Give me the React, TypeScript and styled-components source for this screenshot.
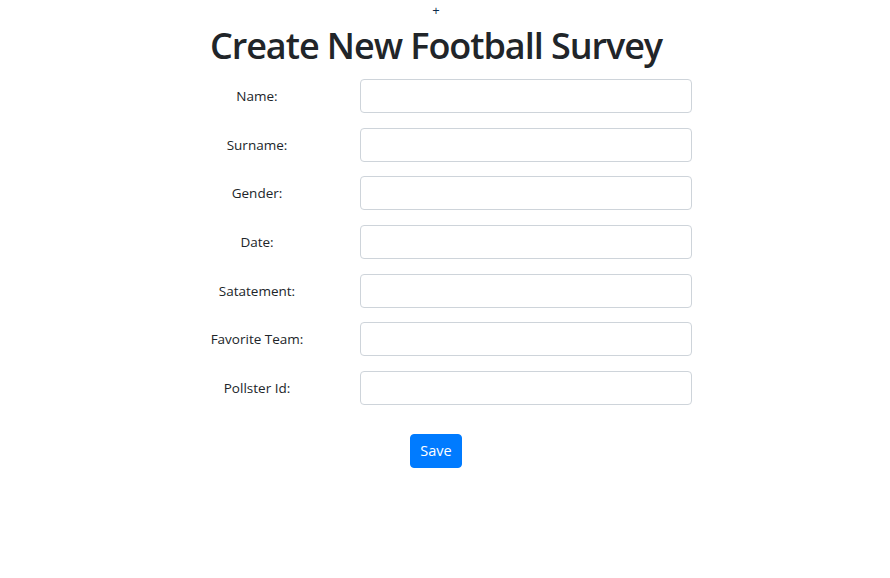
import React from "react";
import styled, { createGlobalStyle } from "styled-components";

const Global = createGlobalStyle`
  * { box-sizing: border-box; }
  body {
    margin: 0;
    background: #fff;
    font-family: "Open Sans", "Noto Sans", sans-serif;
    color: #212529;
  }
`;

const Page = styled.div`
  width: 872px;
  display: flex;
  flex-direction: column;
  align-items: center;
`;

const AddLink = styled.a`
  font-size: 13px;
  line-height: 16px;
  margin-top: 2px;
  color: #0b2a4a;
  text-decoration: none;
`;

const Title = styled.h1`
  margin: 0 0 5px;
  font-size: 36px;
  font-weight: 600;
  letter-spacing: -1.05px;
  line-height: 56px;
  color: #212529;
`;

const Form = styled.form`
  align-self: flex-start;
  margin-left: 154px;
  display: grid;
  grid-template-columns: 206px 332px;
  row-gap: 14.67px;
  align-items: center;
`;

const Label = styled.label`
  text-align: center;
  font-size: 13.5px;
  color: #212529;
`;

const Input = styled.input`
  height: 34px;
  width: 332px;
  border: 1px solid #ced4da;
  border-radius: 4px;
  padding: 6px 12px;
  font: inherit;
`;

const SaveButton = styled.button`
  margin-top: 29px;
  height: 34px;
  width: 52px;
  background: #007bff;
  border: 1px solid #007bff;
  border-radius: 4px;
  color: #fff;
  font-family: inherit;
  font-size: 14.5px;
  padding: 0;
`;

const fields = [
  "Name:",
  "Surname:",
  "Gender:",
  "Date:",
  "Satatement:",
  "Favorite Team:",
  "Pollster Id:",
];

export default function App() {
  return (
    <>
      <Global />
      <Page>
        <AddLink href="#">+</AddLink>
        <Title>Create New Football Survey</Title>
        <Form onSubmit={(e) => e.preventDefault()}>
          {fields.map((f) => (
            <React.Fragment key={f}>
              <Label>{f}</Label>
              <Input type="text" />
            </React.Fragment>
          ))}
        </Form>
        <SaveButton type="submit">Save</SaveButton>
      </Page>
    </>
  );
}
